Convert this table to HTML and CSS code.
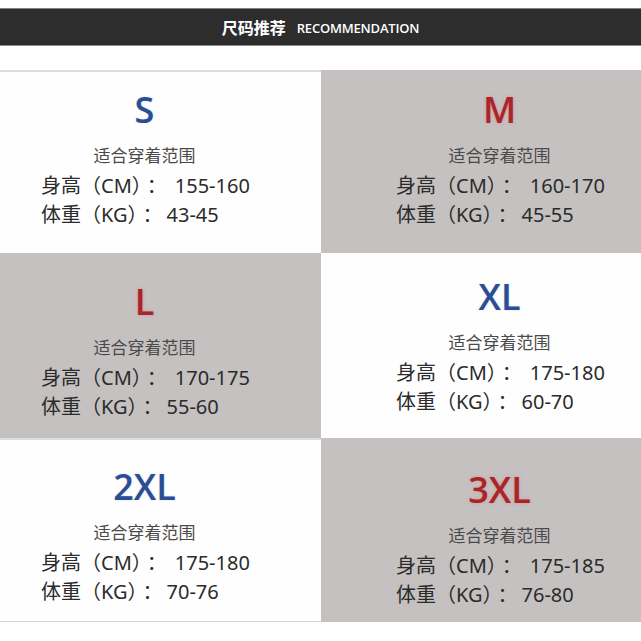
FILE: index.html
```html
<!DOCTYPE html>
<html lang="zh">
<head>
<meta charset="utf-8">
<link rel="stylesheet" href="styles.css">
</head>
<body>
<div class="page">
  <header class="bar">
    <span class="bar-zh">尺码推荐</span>
    <span class="bar-en">RECOMMENDATION</span>
  </header>
  <div class="grid">
    <div class="cell white left pad-s">
      <div class="block">
        <div class="size blue">S</div>
        <div class="sub">适合穿着范围</div>
        <div class="line h"><span class="k">身高（CM）</span><span class="c">：</span><span class="v">155-160</span></div>
        <div class="line w"><span class="k">体重（KG）</span><span class="c">：</span><span class="v">43-45</span></div>
      </div>
    </div>
    <div class="cell grey right pad-m">
      <div class="block">
        <div class="size red">M</div>
        <div class="sub">适合穿着范围</div>
        <div class="line h"><span class="k">身高（CM）</span><span class="c">：</span><span class="v">160-170</span></div>
        <div class="line w"><span class="k">体重（KG）</span><span class="c">：</span><span class="v">45-55</span></div>
      </div>
    </div>
    <div class="cell grey left pad-l">
      <div class="block">
        <div class="size red">L</div>
        <div class="sub">适合穿着范围</div>
        <div class="line h"><span class="k">身高（CM）</span><span class="c">：</span><span class="v">170-175</span></div>
        <div class="line w"><span class="k">体重（KG）</span><span class="c">：</span><span class="v">55-60</span></div>
      </div>
    </div>
    <div class="cell white right pad-xl">
      <div class="block">
        <div class="size blue">XL</div>
        <div class="sub">适合穿着范围</div>
        <div class="line h"><span class="k">身高（CM）</span><span class="c">：</span><span class="v">175-180</span></div>
        <div class="line w"><span class="k">体重（KG）</span><span class="c">：</span><span class="v">60-70</span></div>
      </div>
    </div>
    <div class="cell white left pad-2xl bottom-line">
      <div class="block">
        <div class="size blue">2XL</div>
        <div class="sub">适合穿着范围</div>
        <div class="line h"><span class="k">身高（CM）</span><span class="c">：</span><span class="v">175-180</span></div>
        <div class="line w"><span class="k">体重（KG）</span><span class="c">：</span><span class="v">70-76</span></div>
      </div>
    </div>
    <div class="cell grey right pad-3xl">
      <div class="block">
        <div class="size red">3XL</div>
        <div class="sub">适合穿着范围</div>
        <div class="line h"><span class="k">身高（CM）</span><span class="c">：</span><span class="v">175-185</span></div>
        <div class="line w"><span class="k">体重（KG）</span><span class="c">：</span><span class="v">76-80</span></div>
      </div>
    </div>
  </div>
</div>
</body>
</html>
```
FILE: styles.css
```css
* { box-sizing: border-box; }
html, body { margin: 0; padding: 0; background: #ffffff; }
body {
  width: 641px;
  height: 641px;
  overflow: hidden;
  font-family: "Noto Sans", "Noto Sans CJK SC", sans-serif;
  color: #2a2a2a;
}
.page { padding-top: 8px; }
.bar {
  height: 38px;
  background: #2d2d2d;
  border-top: 1px solid #808080;
  border-bottom: 1px solid #8a8a8a;
  display: flex;
  align-items: center;
  justify-content: center;
  gap: 11px;
  color: #ffffff;
}
.bar-zh {
  font-family: "Noto Sans CJK SC", sans-serif;
  font-weight: 700;
  font-size: 16px;
  line-height: 20px;
}
.bar-en {
  font-family: "Open Sans", "Liberation Sans", sans-serif;
  font-weight: 600;
  font-size: 13px;
  letter-spacing: -0.2px;
  line-height: 20px;
  padding-top: 1px;
}
.grid {
  margin-top: 24px;
  display: grid;
  grid-template-columns: 321px 320px;
  grid-template-rows: 183px 185px 184px;
}
.cell { display: flex; align-items: flex-start; }
.white { background: #fefefe; }
.grey { background: #c4c1c0; }
.white.left { box-shadow: inset 0 2px 0 #dddddd; }
.bottom-line { border-bottom: 1px solid #d4d4d4; }
.left { padding-left: 41px; }
.right { padding-left: 75px; }
.pad-s { padding-top: 18px; }
.pad-m { padding-top: 18px; }
.pad-l { padding-top: 27px; }
.pad-xl { padding-top: 22px; }
.pad-2xl { padding-top: 27px; }
.pad-3xl { padding-top: 30px; }
.block { width: 207px; }
.size {
  text-align: center;
  font-family: "Open Sans", "Noto Sans", sans-serif;
  font-weight: 600;
  font-size: 36px;
  line-height: 44px;
  height: 44px;
}
.blue { color: #2b4e92; text-shadow: 0 0 2px rgba(120, 150, 210, 0.35); }
.red { color: #a6262c; text-shadow: 0 0 3px rgba(255, 90, 90, 0.55); }
.sub {
  margin-top: 11px;
  text-align: center;
  font-family: "Noto Sans CJK SC", sans-serif;
  font-size: 17px;
  line-height: 24px;
  color: #4a4a4a;
}
.line {
  font-size: 20px;
  line-height: 29px;
  white-space: nowrap;
  color: #2b2b2b;
}
.sub + .line { margin-top: 4px; }
.c { margin-left: 5px; }
.h .v { margin-left: 8px; }
.w .v { margin-left: 4px; }
```
